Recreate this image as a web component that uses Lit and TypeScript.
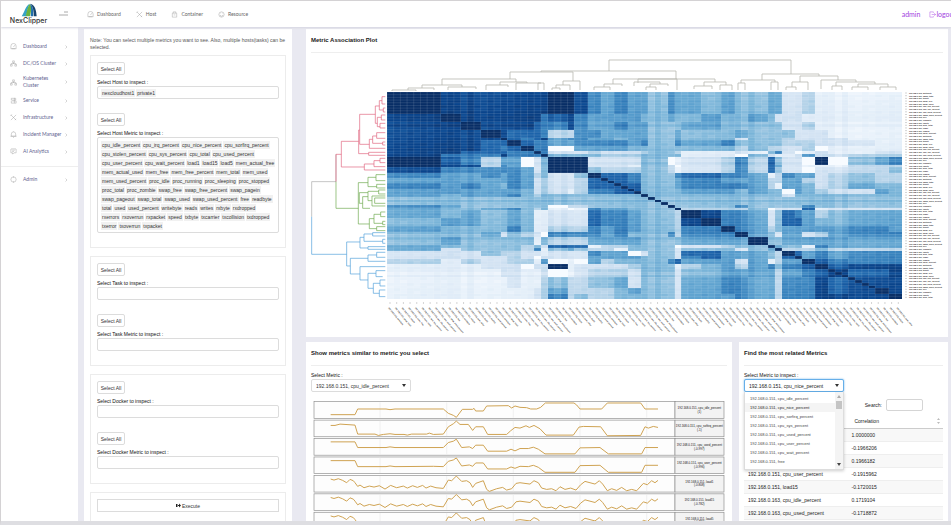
import { LitElement, html, css, svg } from "lit";
import { customElement } from "lit/decorators.js";

/* ---------- correlation matrix ---------- */

const SIZES = [8, 3, 3, 3, 1, 2, 2, 1, 1, 3, 1, 2, 2, 2, 2, 2, 1, 3, 1, 1, 3, 3, 2, 2, 3, 1, 1, 2, 1, 2, 2, 3, 4, 2, 2];
const N = SIZES.reduce((a, b) => a + b, 0);

// Upper triangle of cluster-to-cluster strength, diagonal first.
const LEVELS = [
  "98888888899865655465545445522311111",
  "9888888678655554454454454222111111",
  "988887668655655444554444422311111",
  "98777633665555445444544442221111",
  "9767856655455445444244432222111",
  "976655666656446556444433322211",
  "96600555544444444343322301111",
  "9622232223443111214620121122",
  "944443334444111042112522333",
  "99922224401223637422090456",
  "9922214430223637522111333",
  "943334431223637422022334",
  "97764446776651365523433",
  "7764445665553355323433",
  "774445666653155423544",
  "74444555454405432254",
  "9444444444424444444",
  "444444444444444444",
  "94444644444644444",
  "9333340222712222",
  "986652476534555",
  "96652477544555",
  "9653455555665",
  "954255235666",
  "94455555555",
  "9544165555",
  "933343333",
  "97565666",
  "9565666",
  "976666",
  "97888",
  "8778",
  "888",
  "98",
  "9",
];

const BLUES = [
  [247, 251, 255], [228, 239, 249], [211, 227, 243], [181, 211, 233], [130, 185, 219],
  [95, 163, 208], [56, 131, 190], [28, 99, 170], [9, 68, 140], [8, 46, 102],
];

function shade(v: number): string {
  const t = Math.max(0, Math.min(9, v));
  const i = Math.min(8, Math.floor(t));
  const f = t - i;
  return "rgb(" + BLUES[i].map((c, k) => Math.round(c + (BLUES[i + 1][k] - c) * f)).join(",") + ")";
}

function heatPaths(): [string, string][] {
  const group: number[] = [];
  SIZES.forEach((s, g) => { for (let k = 0; k < s; k++) group.push(g); });
  const wobble = (k: number) => ((k * 37 + (k >> 1) * 11) % 7) / 7 - 0.43;
  const out = new Map<string, string>();
  for (let r = 0; r < N; r++) {
    for (let c = 0; c < N; c++) {
      const a = Math.min(group[r], group[c]);
      const b = Math.max(group[r], group[c]);
      const base = Number(LEVELS[a][b - a] ?? 4);
      const extra = base === 0 || base === 9 ? 0 : (wobble(r) + wobble(c)) * 0.55;
      const v = r === c ? 9 : Math.round((base + extra) * 4) / 4;
      const fill = shade(v);
      out.set(fill, (out.get(fill) ?? "") + `M${c} ${r}h1v1h-1z`);
    }
  }
  return [...out.entries()];
}

/* ---------- dendrograms: [stem, from, to, first arm end, second arm end] ---------- */

type Fork = [number, number, number, number, number];

const RED: Fork[] = [
  [124, 334, 411, 176, 193], [179, 253, 343, 226, 208], [176, 300, 371, 179, 206], [226, 228, 280, 238, 232],
  [238, 212, 240, 246, 250], [246, 200, 222, 256, 256], [250, 234, 246, 256, 256], [232, 262, 290, 244, 240],
  [244, 255, 270, 256, 256], [240, 280, 294, 256, 256], [208, 328, 355, 218, 256], [218, 318, 340, 230, 248],
  [230, 308, 325, 256, 256], [248, 336, 345, 256, 256], [206, 367, 376, 256, 256], [193, 402, 420, 222, 256],
  [222, 392, 410, 240, 256], [240, 385, 398, 256, 256],
];
const GREEN: Fork[] = [
  [175, 458, 582, 204, 208], [204, 442, 470, 228, 230], [228, 434, 452, 256, 256], [230, 463, 474, 256, 256],
  [188, 500, 535, 204, 210], [178, 488, 520, 204, 188], [204, 484, 512, 236, 216], [236, 480, 492, 256, 256],
  [216, 498, 528, 256, 256], [224, 504, 520, 256, 256], [208, 566, 596, 222, 230], [222, 553, 580, 242, 248],
  [242, 546, 560, 256, 256], [248, 574, 584, 256, 256], [230, 590, 602, 256, 256],
];
const BLUE: Fork[] = [
  [140, 636, 708, 180, 151], [180, 622, 654, 192, 204], [192, 612, 634, 218, 248], [218, 608, 618, 256, 256],
  [248, 628, 640, 256, 256], [204, 650, 658, 256, 256], [151, 685, 732, 204, 180], [204, 675, 694, 230, 256],
  [230, 667, 682, 256, 256], [180, 710, 750, 256, 204], [204, 730, 775, 228, 220], [228, 722, 740, 256, 248],
  [220, 760, 790, 240, 238], [240, 750, 768, 256, 256], [238, 780, 800, 256, 256],
];
const TOP: Fork[] = [
  [60, 609, 791, 71, 74], [71, 541, 676, 72, 79], [72, 510, 573, 79, 81], [79, 442, 516, 85, 82],
  [85, 422, 462, 88, 87], [87, 448, 476, 90, 89], [88, 408, 434, 90, 90], [90, 392, 416, 91, 91],
  [82, 500, 527, 85, 83], [85, 486, 508, 90, 87], [83, 516, 541, 90, 83], [83, 538, 544, 90, 90],
  [81, 563, 580, 85, 90], [85, 556, 570, 88, 90], [88, 552, 560, 90, 90], [79, 613, 715, 84, 82],
  [84, 604, 622, 87, 86], [87, 594, 610, 90, 90], [79, 638, 677, 83, 90], [82, 634, 660, 86, 84],
  [84, 650, 668, 87, 86], [87, 646, 656, 90, 90], [82, 704, 726, 86, 85], [86, 694, 712, 89, 89],
  [85, 720, 732, 90, 90], [74, 762, 819, 80, 76], [80, 741, 775, 83, 82], [83, 738, 745, 90, 90],
  [82, 771, 778, 90, 90], [76, 800, 838, 82, 80], [82, 792, 808, 87, 90], [87, 786, 796, 90, 90],
  [80, 821, 856, 89, 82], [82, 836, 875, 86, 84], [86, 832, 842, 90, 90], [84, 858, 888, 87, 87],
  [87, 852, 868, 90, 90], [87, 880, 896, 90, 90],
];

const sideways = (forks: Fork[]) => forks.map(([x, a, b, e, f]) => `M${e} ${a}H${x}V${b}H${f}`).join("");
const upright = (forks: Fork[]) => forks.map(([y, a, b, e, f]) => `M${a} ${e}V${y}H${b}V${f}`).join("");

const METRICS = ["writebyte", "load1", "readbyte", "cpu_used_percent", "mem_used", "swap_total", "load15", "rxbyte",
  "swap_used_percent", "cpu_sys_percent", "txbyte", "used_percent", "proc_total", "free", "cpu_idle_percent", "mem_free"];
const labels = Array.from({ length: N }, (_, i) => `192.168.0.${i % 3 ? 151 : 163}, ${METRICS[(i * 5) % METRICS.length]}`);

/* ---------- similar metric lines ---------- */

const NOISY = "92,11 102,14 115,10 128,15 140,22 150,12 160,16 165,22 173,33 180,29 192,37 208,32 222,35 238,31 255,41 272,30 290,37 310,32 322,38 338,31 352,36 368,30 378,38 392,32 408,37 430,39 445,14 455,16 469,2 485,18 500,16 510,22 518,36 527,24 550,16 560,42 568,48 590,40 608,36 620,44 635,40 648,24 660,22 690,26 702,16 715,22 725,38 740,42 755,40 768,46 780,34 795,42 812,38 828,44 842,28 855,18 870,22 885,26 898,16 908,26 922,46 935,40 950,45 965,36 980,46 995,42 1010,46 1030,24 1042,28 1055,16 1065,22 1074,15";
const SERIES: { name: string; value: string; points: string }[] = [
  { name: "cpu_idle_percent", value: "(1)", points: "92,39 165,39 173,22 258,22 270,24 285,22 430,22 445,35 460,41 469,47 487,23 518,23 522,20 527,28 550,28 560,13 625,12 635,19 645,13 660,17 680,18 692,22 710,22 722,17 736,4 822,4 830,10 840,22 905,22 922,4 1022,4 1035,22 1074,22" },
  { name: "cpu_softirq_percent", value: "(-1)", points: "92,16 105,16 120,12 165,15 173,42 225,42 235,46 250,43 270,41 285,43 312,43 322,45 335,42 380,42 388,39 400,43 430,42 445,20 460,11 469,3 480,13 505,13 518,31 527,20 550,20 563,43 620,43 632,32 645,22 660,24 678,17 688,22 702,16 720,26 738,45 820,45 837,21 850,19 902,20 922,47 1022,46 1035,20 1045,24 1060,19 1074,22" },
  { name: "cpu_used_percent", value: "(-0.997)", points: "92,10 165,10 173,27 258,27 270,25 285,27 430,27 445,12 460,8 469,2 485,27 508,25 518,30 527,20 550,20 563,38 620,38 633,32 645,37 660,30 685,30 700,26 715,32 735,46 825,46 840,28 900,27 925,46 1025,46 1035,27 1074,27" },
  { name: "cpu_user_percent", value: "(-0.996)", points: "92,11 165,11 173,29 258,29 270,27 285,29 400,28 430,29 445,13 460,9 469,3 485,27 508,24 518,28 527,18 550,18 563,36 620,36 633,30 645,34 660,28 685,29 700,25 715,31 735,46 825,46 840,26 900,25 925,46 1025,46 1035,25 1074,25" },
  { name: "load1", value: "(-0.808)", points: NOISY },
  { name: "load15", value: "(-0.782)", points: NOISY },
  { name: "load5", value: "(-0.780)", points: NOISY },
];

/* ---------- icons ---------- */

const ICONS: Record<string, unknown> = {
  gauge: svg`<path d="M2 13V7a6 6 0 0 1 12 0v6zM8 9l3-4M4 13h8"/>`,
  nodes: svg`<path d="M6 2h4v4H6zM1 10h4v4H1zM11 10h4v4h-4zM8 6v3M3 10V8h10v2"/>`,
  service: svg`<path d="M3 3h10v4H3zM5 9h9v5H3V9M10 2v12"/>`,
  tools: svg`<path d="M2 2l12 12M14 2L2 14M1 4l3-3M11 14l3-3"/>`,
  bell: svg`<path d="M3 12V7a5 5 0 0 1 10 0v5zM1 12h14M7 15h2M8 1v1"/>`,
  chat: svg`<path d="M2 3a1 1 0 0 1 1-1h10a1 1 0 0 1 1 1v8H9l-3 3v-3H2zM5 5h6M5 8h4"/>`,
  user: svg`<circle cx="8" cy="8" r="6"/><path d="M8 1v3M8 12v3"/>`,
  box: svg`<path d="M3 5h10v9H3zM5 5V2h6v3M6 9h4"/>`,
  smile: svg`<circle cx="8" cy="8" r="6"/><path d="M5 9a3 3 0 0 0 6 0M5 5h1M10 5h1"/>`,
  exit: svg`<path d="M10 4V2H2v12h8v-2M6 8h9M12 5l3 3-3 3"/>`,
};
const icon = (name: string) => html`<svg class="icon" viewBox="0 0 16 16" aria-hidden="true">${ICONS[name]}</svg>`;

const TAG_ROWS = [
  "cpu_idle_percent cpu_irq_percent cpu_nice_percent cpu_sorfirq_percent",
  "cpu_stolen_percent cpu_sys_percent cpu_total cpu_used_percent",
  "cpu_user_percent cpu_wait_percent load1 load15 load5 mem_actual_free",
  "mem_actual_used mem_free mem_free_percent mem_total mem_used",
  "mem_used_percent proc_idle proc_running proc_sleeping proc_stopped",
  "proc_total proc_zombie swap_free swap_free_percent swap_pagein",
  "swap_pageout swap_total swap_used swap_used_percent free readbyte",
  "total used used_percent writebyte reads writes rxbyte rxdropped",
  "rxerrors rxoverrun rxpacket speed txbyte txcarrier txcollision txdropped",
  "txerror txoverrun txpacket",
];

const base = css`
  * { box-sizing: border-box; }
  button, input, select { font: inherit; color: inherit; margin: 0; }
  a { color: inherit; text-decoration: none; }
  .icon { width: 7px; height: 7px; flex: none; fill: none; stroke: currentColor; stroke-width: 1; }
  .field { display: block; width: 100%; height: 13px; border: 1px solid #dcdcdc; border-radius: 2px; background: #fff; padding: 0 4px; outline: none; }
  .label { display: block; color: #111; line-height: 7px; }
`;

@customElement("metric-filters")
export class MetricFilters extends LitElement {
  static styles = [base, css`
    :host { display: flex; flex-direction: column; gap: 8px; background: #fff; padding: 8px 6px 0; overflow: hidden; color: #333; }
    .note { margin: 0 0 -4px; line-height: 7px; color: #555; }
    .box { flex: none; border: 1px solid #ececec; padding: 6px 6px 14px; display: flex; flex-direction: column; gap: 14px; }
    .all { display: block; width: 28px; height: 13px; padding: 0; border: 1px solid #dcdcdc; border-radius: 2px; background: #fff; margin-bottom: 4px; white-space: nowrap; }
    .tags { border: 1px solid #dcdcdc; border-radius: 2px; padding: 1px 3px; }
    .tags.tall { padding: 2px 3px; }
    .row { display: flex; align-items: center; gap: 1px; min-height: 9px; white-space: nowrap; }
    .tag { background: #f1f1f1; padding: 0 1px; line-height: 8px; }
    .run { width: 100%; height: 13px; border: 1px solid #dcdcdc; background: #fff; padding: 0; display: flex; align-items: center; justify-content: center; gap: 1px; }
    .go { width: 5px; height: 5px; fill: #222; }
  `];

  private empty(id: string, text: string) {
    return html`<div><button class="all" type="button">Select All</button>
      <label class="label" for=${id}>${text}</label><input class="field" id=${id} type="text"></div>`;
  }

  private tagged(id: string, text: string, rows: string[]) {
    return html`<div><button class="all" type="button">Select All</button>
      <span class="label" id=${id}>${text}</span>
      <div class="tags ${rows.length > 1 ? "tall" : ""}" role="group" aria-labelledby=${id}>
        ${rows.map((r) => html`<div class="row">${r.split(" ").map((t) => html`<span class="tag">${t}</span>`)}</div>`)}
      </div></div>`;
  }

  render() {
    return html`
      <p class="note">Note: You can select multiple metrics you want to see. Also, multiple hosts(tasks) can be selected.</p>
      <div class="box">
        ${this.tagged("host", "Select Host to inspect :", ["nexcloudhost1 private1"])}
        ${this.tagged("hostMetric", "Select Host Metric to inspect :", TAG_ROWS)}
      </div>
      <div class="box">
        ${this.empty("task", "Select Task to inspect :")}
        ${this.empty("taskMetric", "Select Task Metric to inspect :")}
      </div>
      <div class="box">
        ${this.empty("docker", "Select Docker to inspect :")}
        ${this.empty("dockerMetric", "Select Docker Metric to inspect :")}
      </div>
      <div class="box">
        <button class="run" type="button"><svg class="go" viewBox="0 0 10 10"><path d="M0 2h3v6H0zM4 4h2V1l4 4-4 4V6H4z"/></svg>Execute</button>
      </div>`;
  }
}

@customElement("association-plot")
export class AssociationPlot extends LitElement {
  static styles = css`
    :host { display: block; }
    .plot { display: block; width: 100%; height: auto; }
    .line { fill: none; stroke-width: 2; }
    .red { stroke: #e0607c; }
    .green { stroke: #6aa84a; }
    .blue { stroke: #4f9fd9; }
    .grey { stroke: #a9a9a9; }
    .top { fill: none; stroke: #b8b8b0; stroke-width: 1; stroke-opacity: 0.8; }
    .grid { fill: none; stroke: #fff; stroke-opacity: 0.22; stroke-width: 0.5; }
    .tick { font-size: 2px; font-weight: 700; fill: #333; }
  `;

  render() {
    const w = 515 / N;
    const h = 207 / N;
    const ids = Array.from({ length: N }, (_, i) => i);
    return html`<svg class="plot" viewBox="306 53 642 284" role="img" aria-label="Metric association heat map">
      <path class="top" d=${upright(TOP)} />
      <g transform="translate(300 30) scale(0.3333)">
        <path class="line grey" d="M108 455H35V560M108 455V373" />
        <path class="line blue" d="M35 560V673H140" />
        <path class="line red" d="M108 455V373H124" />
        <path class="line green" d="M108 455V535H175" />
        <path class="line red" d=${sideways(RED)} />
        <path class="line green" d=${sideways(GREEN)} />
        <path class="line blue" d=${sideways(BLUE)} />
      </g>
      <g transform="translate(387 92) scale(${w} ${h})" shape-rendering="crispEdges">
        ${heatPaths().map(([fill, d]) => svg`<path fill=${fill} d=${d} />`)}
      </g>
      <path class="grid" d=${ids.map((i) => `M${387 + i * w} 92v207M387 ${92 + i * h}h515`).join("")} />
      ${ids.map((i) => svg`
        <path class="grey" stroke-width="0.5" d="M905 ${93 + i * h}h2" />
        <text class="tick" x="909" y=${94 + i * h}>${labels[i]}</text>
        <path class="grey" stroke-width="0.5" d="M${390 + i * w} 302v2" />
        <text class="tick" transform="translate(${388 + i * w} 308) rotate(50)">${labels[i]}</text>`)}
    </svg>`;
  }
}

@customElement("similar-metrics")
export class SimilarMetrics extends LitElement {
  static styles = css`
    :host { display: block; }
    .chart { display: block; width: 100%; height: auto; }
    .frame { fill: #fdfdfd; stroke: #8c8c8c; stroke-width: 2; }
    .name { fill: #f3f3f3; stroke: #8c8c8c; stroke-width: 2; }
    .guide { stroke: #ececec; stroke-width: 2; }
    .curve { fill: none; stroke: #cfa352; stroke-width: 3; stroke-linejoin: round; }
    .text { font-size: 9px; fill: #111; text-anchor: middle; }
  `;

  render() {
    return html`<svg class="chart" viewBox="33 0 1248 388" role="img" aria-label="Metrics similar to cpu_idle_percent">
      ${SERIES.map((s, i) => svg`<g transform="translate(0 ${i * 55.3 + 2})">
        <rect class="frame" x="42" y="0" width="1083" height="50" />
        ${[240, 440, 640, 840, 1040].map((x) => svg`<path class="guide" d="M${x} 2v46" />`)}
        <rect class="name" x="1125" y="0" width="147" height="50" />
        <polyline class="curve" points=${s.points} />
        <text class="text" x="1198" y="22">192.168.0.151, ${s.name}</text>
        <text class="text" x="1198" y="33">${s.value}</text>
      </g>`)}
    </svg>`;
  }
}

const OPTIONS = ["cpu_idle_percent", "cpu_nice_percent", "cpu_sorfirq_percent", "cpu_sys_percent", "cpu_used_percent",
  "cpu_user_percent", "cpu_wait_percent", "free", "load1"];
const ROWS: [string, string][] = [
  ["", "1.0000000"],
  ["", "-0.1966206"],
  ["", "0.1966182"],
  ["192.168.0.151, cpu_user_percent", "-0.1915962"],
  ["192.168.0.151, load15", "-0.1720015"],
  ["192.168.0.163, cpu_idle_percent", "0.1719104"],
  ["192.168.0.163, cpu_used_percent", "-0.1718872"],
];

@customElement("related-metrics")
export class RelatedMetrics extends LitElement {
  static styles = [base, css`
    :host { display: block; color: #222; }
    .combo { position: relative; width: 50%; min-width: 100px; }
    .field { border-color: #66afe9; box-shadow: 0 0 2px #66afe9; }
    .caret { position: absolute; right: 5px; top: 5px; border: 2px solid transparent; border-top: 3px solid #333; border-bottom: 0; }
    .menu { position: absolute; top: 13px; left: 0; right: 0; height: 78px; margin: 0; padding: 2px 0 0; list-style: none; background: #fff; border: 1px solid #ddd; border-top: 0; box-shadow: 0 1px 3px #0003; overflow: hidden; z-index: 1; color: #444; font-size: 4px; }
    .option { padding: 0 5px; line-height: 9px; white-space: nowrap; }
    .option.on { background: #f4f4f4; color: #222; }
    .bar { position: absolute; top: 0; right: 0; bottom: 0; width: 8px; background: #f4f4f4; }
    .thumb { margin: 9px 1px 0; height: 8px; background: #c4c4c4; }
    .up, .down { position: absolute; left: 2px; border: 2px solid transparent; }
    .up { top: 3px; border-top: 0; border-bottom: 3px solid #aaa; }
    .down { bottom: 3px; border-bottom: 0; border-top: 3px solid #444; }
    .search { display: flex; justify-content: flex-end; align-items: center; gap: 4px; padding: 7px 20px 0 0; }
    .query { width: 37px; height: 12px; border: 1px solid #d5d5d5; border-radius: 2px; padding: 0 2px; background: #fff; }
    .grid { width: 100%; border-collapse: collapse; table-layout: fixed; margin-top: 3px; }
    .grid th { height: 14px; padding: 0 3px; text-align: left; font-weight: 400; border-bottom: 1px solid #ccc; }
    .grid th + th { padding-left: 7px; }
    .grid td { height: 13px; padding: 0 4px; border-bottom: 1px solid #eee; white-space: nowrap; }
    .grid tbody tr:nth-child(odd) { background: #f8f8f8; }
    .head { display: flex; justify-content: space-between; align-items: center; }
    .head.end { justify-content: flex-end; }
    .sort { width: 3px; height: 6px; fill: #bbb; }
    .first { width: 52%; }
  `];

  render() {
    const sort = html`<svg class="sort" viewBox="0 0 6 12"><path d="M0 4l3-4 3 4zM0 8h6l-3 4z"/></svg>`;
    return html`
      <label class="label" for="inspect">Select Metric to inspect :</label>
      <div class="combo">
        <input class="field" id="inspect" role="combobox" aria-expanded="true" .value=${"192.168.0.151, cpu_nice_percent"}>
        <span class="caret"></span>
        <ul class="menu" role="listbox">
          ${OPTIONS.map((o, i) => html`<li class="option ${i === 1 ? "on" : ""}" role="option">192.168.0.151, ${o}</li>`)}
          <li class="bar" role="presentation"><div class="up"></div><div class="thumb"></div><div class="down"></div></li>
        </ul>
      </div>
      <div class="search"><label for="query">Search:</label><input class="query" id="query" type="search"></div>
      <table class="grid">
        <thead><tr><th class="first" aria-label="Metric"><div class="head end">${sort}</div></th><th><div class="head"><span>Correlation</span>${sort}</div></th></tr></thead>
        <tbody>${ROWS.map(([m, c]) => html`<tr><td>${m}</td><td>${c}</td></tr>`)}</tbody>
      </table>`;
  }
}

const SIDE: [string, string][] = [["gauge", "Dashboard"], ["nodes", "DC/OS Cluster"], ["nodes", "Kubernetes Cluster"],
  ["service", "Service"], ["tools", "Infrastructure"], ["bell", "Incident Manager"], ["chat", "AI Analytics"]];
const TABS: [string, string][] = [["gauge", "Dashboard"], ["tools", "Host"], ["box", "Container"], ["smile", "Resource"]];

@customElement("app-root")
export class AppRoot extends LitElement {
  static styles = [base, css`
    :host { display: flex; flex-direction: column; box-sizing: border-box; height: 100vh; overflow: hidden; background: #e9e9f1; border: 1px solid #d4d2d4; border-bottom: 4px solid #dedee2; border-right: 0; font: 5px/8px "Liberation Sans", sans-serif; }
    .top { flex: none; display: flex; align-items: center; height: 26px; background: #fff; box-shadow: 0 1px 2px #d5d5e0; z-index: 1; overflow: hidden; font: 5px/8px "Lato", sans-serif; color: #666; }
    .logo { width: 58px; padding-left: 10px; flex: none; }
    .brand { display: flex; flex-direction: column; align-items: center; width: 35px; color: #333; font: 500 7px/8px "Inter", sans-serif; }
    .mark { width: 16px; height: 14px; }
    .burger { width: 10px; height: 6px; border: 0; padding: 0; background: none; margin-right: 18px; }
    .lines { display: block; width: 10px; height: 6px; stroke: #aaa; stroke-width: 1; }
    .tabs { display: flex; gap: 15px; flex: 1; }
    .tab, .item { display: flex; align-items: center; }
    .tab { gap: 3px; }
    .tab .icon { color: #999; }
    .account { display: flex; gap: 9px; color: #a23fe0; font-size: 7px; margin-right: -5px; }
    .account a { display: flex; align-items: center; }
    .body { flex: 1; min-height: 0; display: grid; grid-template-columns: 77px 208px minmax(0, 1fr); column-gap: 6px; }
    .side { background: #fff; padding: 11px 10px 0 9px; font: 5px/7px "Lato", sans-serif; color: #62628f; }
    .item { min-height: 17px; gap: 6px; }
    .item:nth-child(3) { padding: 3px 0; }
    .item .icon { color: #999; }
    .item .name { flex: 1; margin-right: -6px; }
    .item .name.wrap { margin-right: 10px; }
    .arrow { flex: none; width: 3px; height: 4px; fill: none; stroke: #aaa; }
    .rule { border: 0; border-top: 1px solid #eee; margin: 6px -10px 4px -9px; }
    .filters { margin-top: 2px; }
    .main { margin: 2px 3px 0 8px; display: flex; flex-direction: column; gap: 5px; min-height: 0; }
    .panel { background: #fff; overflow: hidden; }
    .title { margin: 0 5px; padding: 7px 0; font: 700 6px/9px "Liberation Sans", sans-serif; color: #222; border-bottom: 1px solid #eee; }
    .pair { flex: 1; min-height: 0; display: grid; grid-template-columns: minmax(0, 426fr) minmax(0, 209fr); gap: 7px; }
    .content { padding: 6px 5px 0; }
    .pick { appearance: none; color: #333; }
    .select { position: relative; width: 100px; margin-bottom: 9px; }
    .caret { position: absolute; right: 5px; top: 5px; border: 2px solid transparent; border-top: 3px solid #333; border-bottom: 0; }
  `];

  private item([glyph, text]: [string, string]) {
    return html`<a class="item" href="#">${icon(glyph)}<span class="name ${text.length > 16 ? "wrap" : ""}">${text}</span>
      <svg class="arrow" viewBox="0 0 6 8"><path d="M1 1l3 3-3 3"/></svg></a>`;
  }

  render() {
    return html`
      <header class="top">
        <div class="logo"><a class="brand" href="#">
          <svg class="mark" viewBox="0 0 48 42" aria-hidden="true">
            <path fill="#36a3c6" d="M2 40C10 28 14 8 26 2 20 14 18 30 16 40z"/>
            <path fill="#6cb33f" d="M14 40C18 24 20 10 27 2 33 12 30 28 27 40z"/>
            <path fill="#1f6fae" d="M27 2C36 8 38 24 36 40H29C31 26 31 12 27 2z"/>
            <path fill="#17456f" d="M29 2C42 6 46 22 47 40H38C39 26 36 12 29 2z"/>
          </svg>NexClipper</a></div>
        <button class="burger" type="button" aria-label="Toggle menu"><svg class="lines" viewBox="0 0 10 6"><path d="M5 1h4M0 4h9" /></svg></button>
        <nav class="tabs">${TABS.map(([g, t]) => html`<a class="tab" href="#">${icon(g)}${t}</a>`)}</nav>
        <div class="account"><a href="#">admin</a><a href="#">${icon("exit")}logout</a></div>
      </header>
      <div class="body">
        <nav class="side">
          ${SIDE.map((s) => this.item(s))}
          <hr class="rule">
          ${this.item(["user", "Admin"])}
        </nav>
        <metric-filters class="filters"></metric-filters>
        <main class="main">
          <section class="panel">
            <h2 class="title">Metric Association Plot</h2>
            <association-plot></association-plot>
          </section>
          <div class="pair">
            <section class="panel">
              <h2 class="title">Show metrics similar to metric you select</h2>
              <div class="content">
                <label class="label" for="metric">Select Metric :</label>
                <div class="select"><select class="field pick" id="metric"><option>192.168.0.151, cpu_idle_percent</option></select><span class="caret"></span></div>
                <similar-metrics></similar-metrics>
              </div>
            </section>
            <section class="panel">
              <h2 class="title">Find the most related Metrics</h2>
              <div class="content"><related-metrics></related-metrics></div>
            </section>
          </div>
        </main>
      </div>`;
  }
}
